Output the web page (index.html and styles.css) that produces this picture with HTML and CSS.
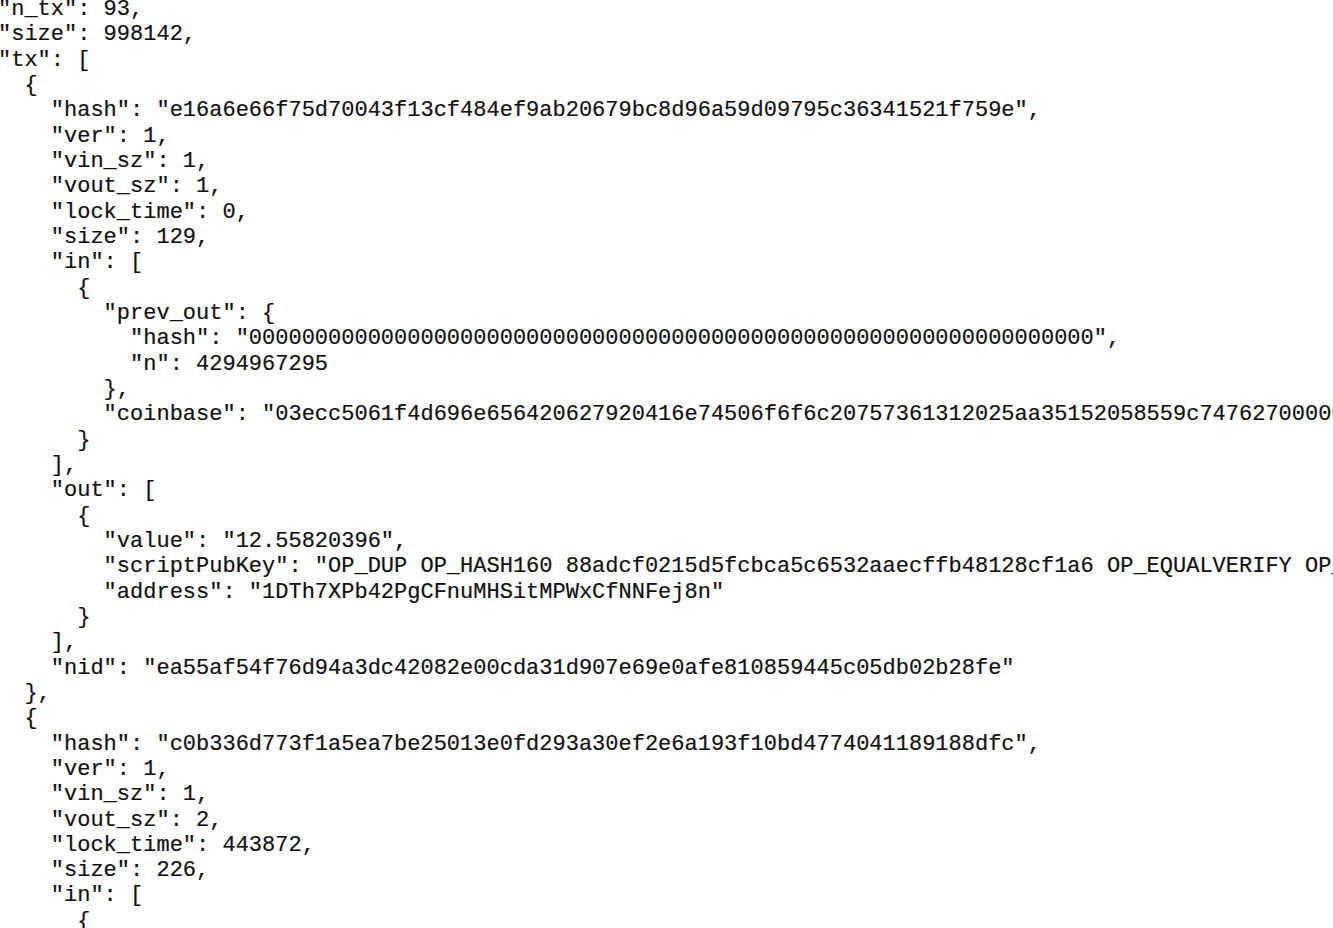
FILE: index.html
```html
<!DOCTYPE html>
<html lang="en">
<head>
<meta charset="utf-8">
<title>block json</title>
<link rel="stylesheet" href="styles.css">
</head>
<body>
<pre class="json">"n_tx": 93,
"size": 998142,
"tx": [
  {
    "hash": "e16a6e66f75d70043f13cf484ef9ab20679bc8d96a59d09795c36341521f759e",
    "ver": 1,
    "vin_sz": 1,
    "vout_sz": 1,
    "lock_time": 0,
    "size": 129,
    "in": [
      {
        "prev_out": {
          "hash": "0000000000000000000000000000000000000000000000000000000000000000",
          "n": 4294967295
        },
        "coinbase": "03ecc5061f4d696e656420627920416e74506f6f6c20757361312025aa35152058559c74762700000000000000"
      }
    ],
    "out": [
      {
        "value": "12.55820396",
        "scriptPubKey": "OP_DUP OP_HASH160 88adcf0215d5fcbca5c6532aaecffb48128cf1a6 OP_EQUALVERIFY OP_CHECKSIG",
        "address": "1DTh7XPb42PgCFnuMHSitMPWxCfNNFej8n"
      }
    ],
    "nid": "ea55af54f76d94a3dc42082e00cda31d907e69e0afe810859445c05db02b28fe"
  },
  {
    "hash": "c0b336d773f1a5ea7be25013e0fd293a30ef2e6a193f10bd4774041189188dfc",
    "ver": 1,
    "vin_sz": 1,
    "vout_sz": 2,
    "lock_time": 443872,
    "size": 226,
    "in": [
      {
        "prev_out": {
</pre>
</body>
</html>
```

FILE: styles.css
```css
html, body {
  margin: 0;
  padding: 0;
  background: #ffffff;
  overflow: hidden;
}

.json {
  margin: -3px 0 0 -2px;
  font-family: "Liberation Mono", "Courier New", monospace;
  font-size: 22px;
  line-height: 25.33px;
  color: #111111;
  -webkit-text-stroke: 0.2px #111111;
  white-space: pre;
}
```
